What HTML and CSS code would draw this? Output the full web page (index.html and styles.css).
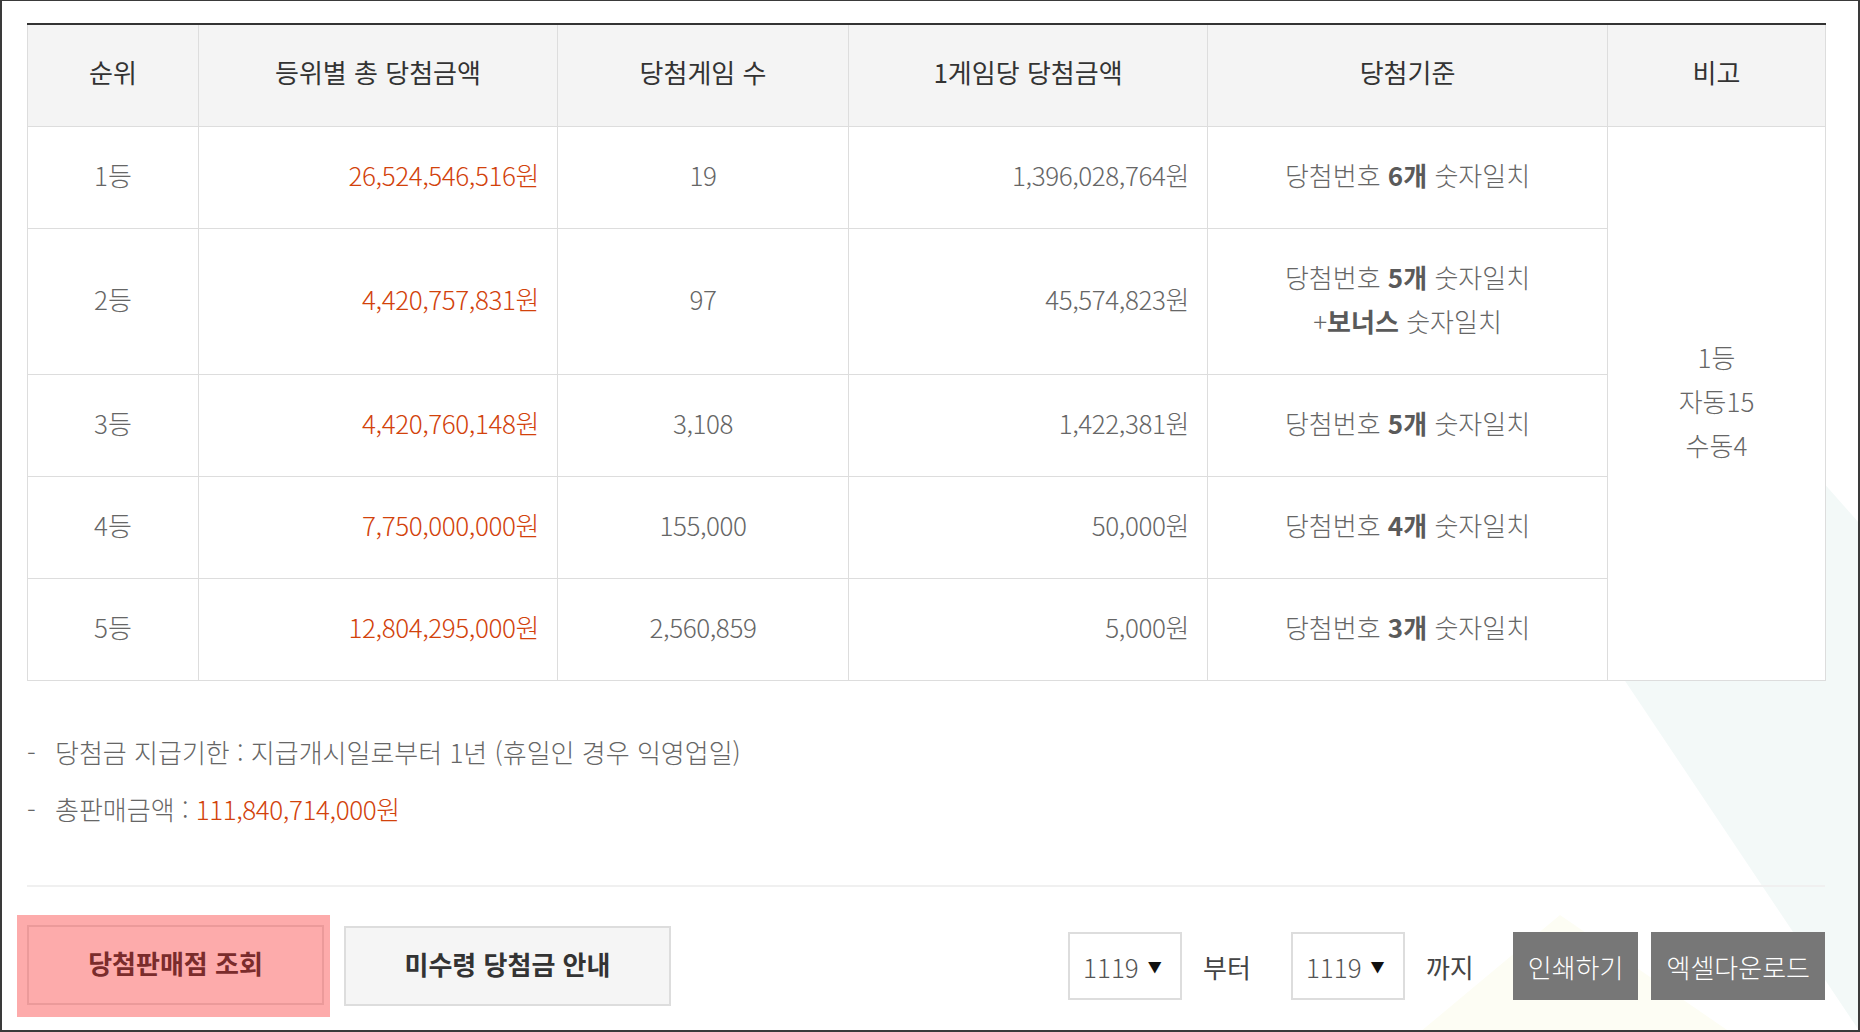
FILE: index.html
```html
<!DOCTYPE html>
<html lang="ko">
<head>
    <meta charset="UTF-8">
    <meta name="viewport" content="width=device-width, initial-scale=1.0">
    <title>당첨결과</title>
    <link rel="stylesheet" href="styles.css">
</head>
<body>
    <div class="frame">
        <svg class="bg-deco" width="1860" height="1032" viewBox="0 0 1860 1032">
            <polygon points="1437,400 1750,400 1860,524 1860,1032" fill="#f3f9f8"/>
            <polygon points="1420,1032 1560,915 1730,1032" fill="#fdfdf4"/>
        </svg>

        <div class="content">
            <table class="result-table">
                <colgroup>
                    <col style="width:171px">
                    <col style="width:359px">
                    <col style="width:291px">
                    <col style="width:359px">
                    <col style="width:400px">
                    <col style="width:218px">
                </colgroup>
                <thead>
                    <tr>
                        <th>순위</th>
                        <th>등위별 총 당첨금액</th>
                        <th>당첨게임 수</th>
                        <th>1게임당 당첨금액</th>
                        <th>당첨기준</th>
                        <th>비고</th>
                    </tr>
                </thead>
                <tbody>
                    <tr>
                        <td>1등</td>
                        <td class="num red">26,524,546,516원</td>
                        <td class="cnt">19</td>
                        <td class="num">1,396,028,764원</td>
                        <td>당첨번호 <strong>6개</strong> 숫자일치</td>
                        <td rowspan="5">1등<br>자동15<br>수동4</td>
                    </tr>
                    <tr>
                        <td>2등</td>
                        <td class="num red">4,420,757,831원</td>
                        <td class="cnt">97</td>
                        <td class="num">45,574,823원</td>
                        <td>당첨번호 <strong>5개</strong> 숫자일치<br>+<strong>보너스</strong> 숫자일치</td>
                    </tr>
                    <tr>
                        <td>3등</td>
                        <td class="num red">4,420,760,148원</td>
                        <td class="cnt">3,108</td>
                        <td class="num">1,422,381원</td>
                        <td>당첨번호 <strong>5개</strong> 숫자일치</td>
                    </tr>
                    <tr>
                        <td>4등</td>
                        <td class="num red">7,750,000,000원</td>
                        <td class="cnt">155,000</td>
                        <td class="num">50,000원</td>
                        <td>당첨번호 <strong>4개</strong> 숫자일치</td>
                    </tr>
                    <tr>
                        <td>5등</td>
                        <td class="num red">12,804,295,000원</td>
                        <td class="cnt">2,560,859</td>
                        <td class="num">5,000원</td>
                        <td>당첨번호 <strong>3개</strong> 숫자일치</td>
                    </tr>
                </tbody>
            </table>

            <ul class="notes">
                <li><span class="dash">-</span><span>당첨금 지급기한 : 지급개시일로부터 1년 (휴일인 경우 익영업일)</span></li>
                <li><span class="dash">-</span><span>총판매금액 : <em class="red">111,840,714,000원</em></span></li>
            </ul>

            <div class="btn-row">
                <div class="btn-left">
                    <span class="highlight">
                        <a class="btn-line btn-store" href="#">당첨판매점 조회</a>
                    </span>
                    <a class="btn-line" href="#">미수령 당첨금 안내</a>
                </div>
                <div class="btn-right">
                    <div class="select-box">1119 <span class="arrow">▼</span></div>
                    <span class="label">부터</span>
                    <div class="select-box">1119 <span class="arrow">▼</span></div>
                    <span class="label">까지</span>
                    <a class="btn-gray" href="#">인쇄하기</a>
                    <a class="btn-gray" href="#">엑셀다운로드</a>
                </div>
            </div>
        </div>
    </div>
</body>
</html>
```

FILE: styles.css
```css
body {
    margin: 0;
    padding: 0;
    background: #fff;
    font-family: "Noto Sans CJK KR", "Noto Sans", sans-serif;
    color: #666;
}
.frame {
    position: relative;
    box-sizing: border-box;
    width: 1860px;
    height: 1032px;
    border: 2px solid #3a3a3a;
    border-top-width: 1px;
    overflow: hidden;
}
.bg-deco {
    position: absolute;
    left: -2px;
    top: -1px;
    z-index: 0;
}
.content {
    position: relative;
    z-index: 1;
    padding: 22px 33px 0 25px;
}
.result-table {
    width: 1798px;
    border-collapse: collapse;
    table-layout: fixed;
    border-top: 2px solid #333;
    background: #fff;
    font-size: 26px;
    line-height: 44px;
}
.result-table th {
    background: #f4f4f4;
    color: #333;
    font-weight: 400;
    padding: 25px 0 32px;
    border: 1px solid #ddd;
    border-top: 2px solid #333;
}
.result-table td {
    text-align: center;
    padding: 26px 20px 31px;
    border: 1px solid #ddd;
    font-weight: 300;
    color: #666;
}
.result-table td.num {
    text-align: right;
    padding-right: 18px;
    letter-spacing: -0.4px;
}
.result-table td.cnt {
    letter-spacing: -0.4px;
}
.result-table strong {
    font-weight: 700;
    color: #5a5a5a;
}
.red {
    color: #d2420b !important;
}
.notes {
    list-style: none;
    margin: 49px 0 0;
    padding: 0 0 54px;
    border-bottom: 2px solid #f0f0f0;
    font-size: 26px;
    line-height: 44px;
    font-weight: 300;
    color: #666;
}
.notes li {
    display: flex;
}
.notes li + li {
    margin-top: 13px;
}
.notes .dash {
    width: 28px;
}
.notes em {
    font-style: normal;
    letter-spacing: -0.4px;
}
.btn-row {
    display: flex;
    justify-content: space-between;
    align-items: center;
    margin-top: 28px;
}
.btn-left {
    display: flex;
    align-items: center;
}
.highlight {
    display: flex;
    margin-left: -10px;
    padding: 10px 6px 12px 10px;
    background: #fdabab;
}
.btn-line {
    box-sizing: border-box;
    display: flex;
    align-items: center;
    justify-content: center;
    height: 80px;
    width: 327px;
    padding: 0 0 6px;
    background: #f5f5f5;
    border: 2px solid #ddd;
    color: #333;
    font-size: 26px;
    font-weight: 700;
    text-decoration: none;
    margin-left: 14px;
}
.highlight .btn-line {
    margin-left: 0;
    width: 297px;
}
.btn-store {
    background: #fdabab;
    border-color: #eb9a9a;
    color: #7a2c2c !important;
}
.btn-right {
    display: flex;
    align-items: center;
    font-size: 26px;
}
.select-box {
    box-sizing: border-box;
    display: flex;
    align-items: center;
    width: 114px;
    height: 68px;
    padding-left: 13px;
    border: 2px solid #ddd;
    background: #fff;
    color: #555;
    font-weight: 300;
}
.select-box .arrow {
    font-size: 14px;
    color: #111;
    margin-left: 9px;
}
.label {
    color: #444;
    margin: 0 40px 0 21px;
}
.btn-gray {
    display: flex;
    align-items: center;
    justify-content: center;
    height: 68px;
    padding: 0 15px;
    background: #777;
    color: #fff;
    font-weight: 300;
    text-decoration: none;
    margin-left: 13px;
}
.label + .btn-gray {
    margin-left: -1px;
}
```
